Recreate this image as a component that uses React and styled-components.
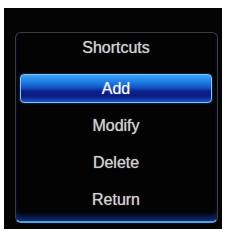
import React from "react";
import styled, { createGlobalStyle } from "styled-components";

const Global = createGlobalStyle`
  html, body { margin: 0; padding: 0; background: #ffffff; }
  body { width: 226px; height: 234px; overflow: hidden; }
`;

const Screen = styled.div`
  margin: 8px 4px 0 4px;
  width: 218px;
  height: 221px;
  background: #040405;
  box-sizing: border-box;
  padding: 24px 4px 6px 11px;
  display: flex;
`;

const Panel = styled.div`
  flex: 1;
  box-sizing: border-box;
  border: 1px solid #3c3d40;
  border-bottom: 2px solid #49a6e6;
  border-radius: 6px;
  background: #030304;
  box-shadow: inset 0 -7px 6px -3px rgba(20, 60, 170, 0.75);
  display: flex;
  flex-direction: column;
  padding: 0 5px 8px 4px;
  font-family: "Liberation Sans", Arial, sans-serif;
`;

const Title = styled.div`
  height: 29px;
  line-height: 29px;
  text-align: center;
  color: #cfcfd0;
  font-size: 16px;
  text-shadow: 0 0 1px rgba(220, 220, 220, 0.8);
  margin-bottom: 12px;
`;

const Menu = styled.div`
  display: flex;
  flex-direction: column;
  gap: 8px;
`;

const Item = styled.div`
  height: 29px;
  box-sizing: border-box;
  display: flex;
  align-items: center;
  justify-content: center;
  font-size: 16px;
  color: ${(p) => (p.$active ? "#f4f6ff" : "#cfcfd0")};
  text-shadow: 0 0 1px rgba(220, 220, 220, 0.8);
  border-radius: 4px;
  ${(p) =>
    p.$active &&
    `
    border: 1px solid #7cc6ff;
    background: linear-gradient(
      to bottom,
      #3ea2f4 0%,
      #1f7fe6 25%,
      #1456c8 45%,
      #0a1f8a 62%,
      #0a1c80 78%,
      #1a55c8 100%
    );
    box-shadow: 0 0 2px rgba(90, 170, 255, 0.6);
  `}
`;

const items = ["Add", "Modify", "Delete", "Return"];

export default function App() {
  return (
    <>
      <Global />
      <Screen>
        <Panel>
          <Title>Shortcuts</Title>
          <Menu>
            {items.map((t, i) => (
              <Item key={t} $active={i === 0}>
                {t}
              </Item>
            ))}
          </Menu>
        </Panel>
      </Screen>
    </>
  );
}
